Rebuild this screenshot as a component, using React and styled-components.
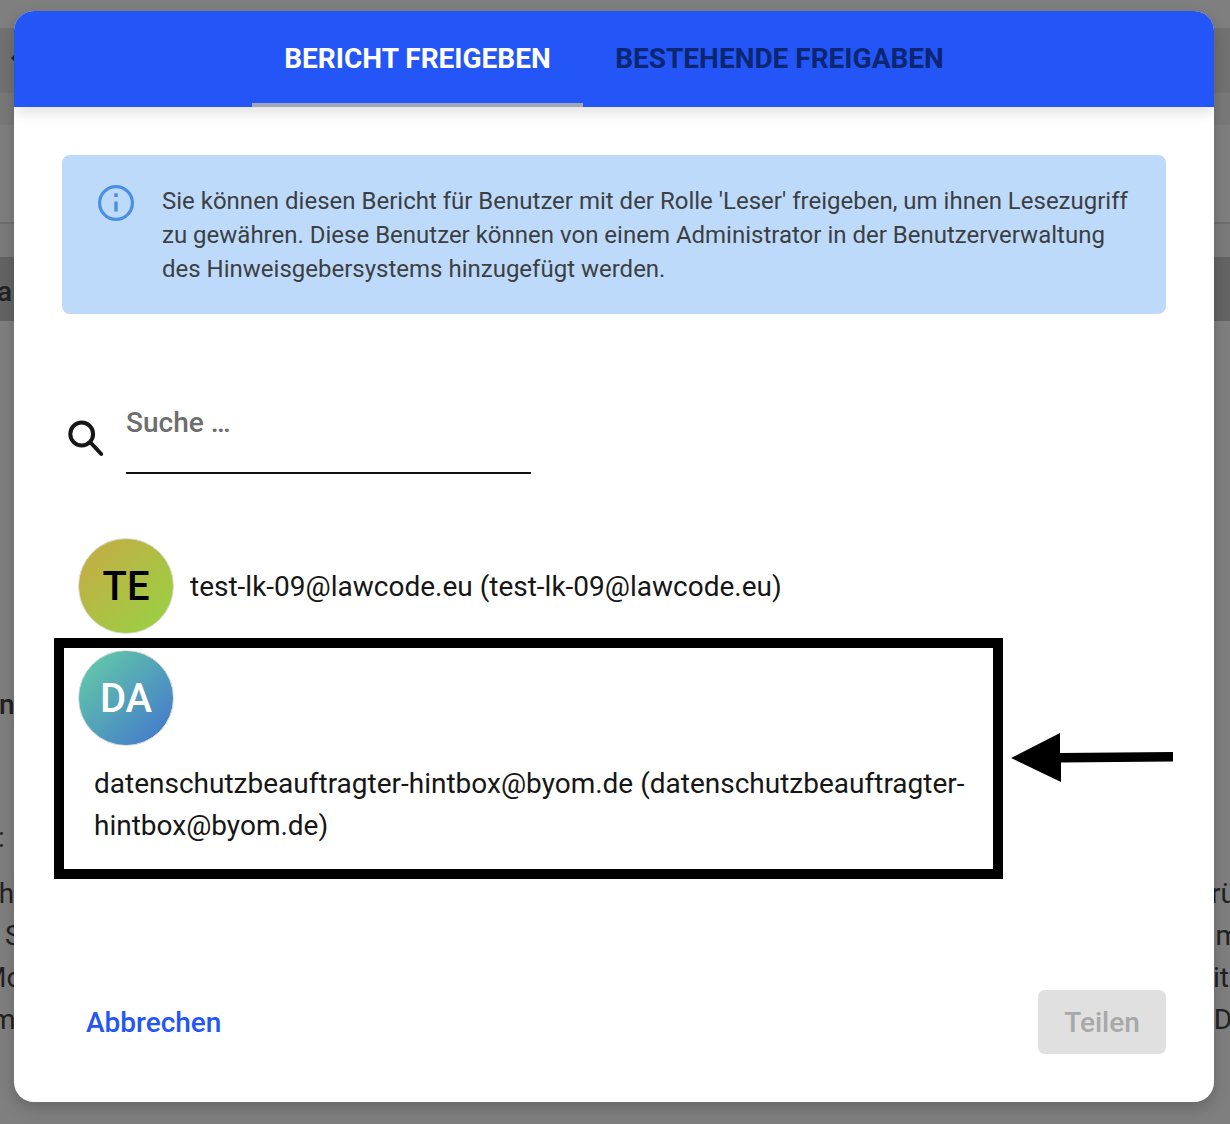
import React from "react";
import styled, { createGlobalStyle } from "styled-components";

const GlobalStyle = createGlobalStyle`
  html, body {
    margin: 0;
    padding: 0;
    height: 100%;
    background: #7f7f7f;
    overflow: hidden;
    font-family: Roboto, "Liberation Sans", sans-serif;
  }
`;

const Page = styled.div`
  width: 1230px;
  height: 1124px;
  position: relative;
  overflow: hidden;
  background: #7f7f7f;
`;

const Backdrop = styled.div`
  display: flex;
  flex-direction: column;
  color: #222;
  font-size: 28px;
  line-height: 32px;
`;

const Band = styled.div`
  display: flex;
  align-items: center;
  flex: none;
  box-sizing: border-box;
  height: ${props => props.size}px;
  padding-top: ${props => props.nudge || 0}px;
  background: ${props => props.color || "transparent"};
`;

const BackArrow = styled.div`
  margin: 0 0 6px 11px;
  border-style: solid;
  border-width: 4px 4px 4px 0;
  border-color: transparent #222 transparent transparent;
`;

const BackLine = styled.div`
  display: flex;
  justify-content: space-between;
  align-items: center;
  flex: none;
  height: 42px;
  margin-top: ${props => props.above || 0}px;
  box-sizing: border-box;
`;

const BackWord = styled.span`
  white-space: nowrap;
  font-weight: ${props => props.weight || 400};
  margin-left: ${props => props.before || 0}px;
  margin-right: ${props => props.after || 0}px;
`;

const Overlay = styled.div`
  position: absolute;
  inset: 0;
  display: flex;
  padding: 11px 16px 22px 14px;
`;

const Dialog = styled.div`
  flex: 1;
  display: flex;
  flex-direction: column;
  background: #fff;
  border-radius: 20px;
  overflow: hidden;
  box-shadow: 0 6px 16px rgba(0, 0, 0, 0.2);
`;

const TabBar = styled.div`
  flex: none;
  height: 96px;
  display: flex;
  justify-content: center;
  background: #2355f7;
  box-shadow: 0 4px 14px rgba(0, 0, 0, 0.14);
  position: relative;
`;

const Tab = styled.div`
  width: ${props => props.width}px;
  box-sizing: border-box;
  padding-top: 30px;
  text-align: center;
  font-size: 28px;
  line-height: 36px;
  font-weight: 700;
  white-space: nowrap;
  color: ${props => (props.active ? "#fff" : "#0c2672")};
  border-bottom: 4px solid ${props => (props.active ? "#a3a8b8" : "transparent")};
`;

const Body = styled.div`
  flex: 1;
  display: flex;
  flex-direction: column;
  padding: 48px;
`;

const InfoBox = styled.div`
  display: flex;
  height: 159px;
  box-sizing: border-box;
  padding: 29px 36px 0 35px;
  gap: 27px;
  background: #bedafb;
  border-radius: 8px;
`;

const InfoIcon = styled.svg`
  flex: none;
  width: 38px;
  height: 38px;
  color: #4a8fe6;
`;

const InfoText = styled.p`
  margin: 0;
  font-size: 24px;
  line-height: 34px;
  color: #3c3f42;
`;

const SearchRow = styled.div`
  display: flex;
  gap: 16px;
  margin-top: 72px;
  height: 88px;
`;

const SearchIcon = styled.svg`
  flex: none;
  width: 48px;
  height: 48px;
  margin-top: 29px;
  color: #161616;
`;

const SearchField = styled.div`
  width: 405px;
  box-sizing: border-box;
  padding-top: 21px;
  border-bottom: 2px solid #111;
  font-size: 28px;
  line-height: 32px;
  font-weight: 500;
  color: #6d6d6d;
`;

const UserList = styled.div`
  margin-top: 64px;
  display: flex;
  flex-direction: column;
  gap: 4px;
`;

const UserRow = styled.div`
  display: flex;
  align-items: center;
  gap: 16px;
  padding: 0 16px;
  height: 96px;
`;

const Avatar = styled.div`
  flex: none;
  width: 96px;
  height: 96px;
  border-radius: 50%;
  border: 1px solid #ddd;
  box-sizing: border-box;
  display: flex;
  align-items: center;
  justify-content: center;
  font-size: 40px;
  font-weight: 500;
  color: ${props => props.ink};
  background: linear-gradient(135deg, ${props => props.from}, ${props => props.to});
`;

const UserName = styled.div`
  font-size: 28px;
  line-height: 42px;
  padding-top: 2px;
  color: #161616;
`;

const Marked = styled.div`
  position: relative;
  width: 949px;
  margin-left: -8px;
  box-sizing: border-box;
  height: 241px;
  border: 10px solid #000;
  padding: 2px 16px 0 14px;
`;

const MarkedName = styled(UserName)`
  padding: 16px 0 0 16px;
  margin-top: 1px;
`;

const Arrow = styled.svg`
  position: absolute;
  left: 947px;
  top: 82px;
  width: 170px;
  height: 60px;
`;

const Actions = styled.div`
  margin-top: auto;
  display: flex;
  justify-content: space-between;
  align-items: center;
`;

const CancelButton = styled.button`
  border: 0;
  background: transparent;
  padding: 2px 24px 0;
  font: 500 28px/36px Roboto, sans-serif;
  color: #2355f7;
`;

const ShareButton = styled.button`
  border: 0;
  width: 128px;
  height: 64px;
  padding: 2px 0 0;
  border-radius: 7px;
  background: #e0e0e0;
  font: 500 28px/36px Roboto, sans-serif;
  color: #a8a8a8;
`;

const App = () => (
  <Page>
    <GlobalStyle />
    <Backdrop>
      <Band size={28} />
      <Band size={65} color="#727272">
        <BackArrow />
      </Band>
      <Band size={32} color="#797979" />
      <Band size={97} />
      <Band size={2} color="#6e6e6e" />
      <Band size={33} color="#7b7b7b" />
      <Band size={64} color="#646464" nudge={6}>
        <BackWord weight={500} before={-3}>a</BackWord>
      </Band>
      <BackLine above={363}>
        <BackWord weight={500} before={-1}>n</BackWord>
      </BackLine>
      <BackLine above={91}>
        <BackWord before={-2}>:</BackWord>
      </BackLine>
      <BackLine above={14}>
        <BackWord before={-16}>eh</BackWord>
        <BackWord after={-6}>rü</BackWord>
      </BackLine>
      <BackLine>
        <BackWord before={5}>S</BackWord>
        <BackWord after={-10}>m</BackWord>
      </BackLine>
      <BackLine>
        <BackWord before={-18}>Mo</BackWord>
        <BackWord after={1}>it</BackWord>
      </BackLine>
      <BackLine>
        <BackWord before={-9}>m</BackWord>
        <BackWord after={-2}>D</BackWord>
      </BackLine>
    </Backdrop>
    <Overlay>
      <Dialog>
        <TabBar>
          <Tab active width={331}>BERICHT FREIGEBEN</Tab>
          <Tab width={393}>BESTEHENDE FREIGABEN</Tab>
        </TabBar>
        <Body>
          <InfoBox>
            <InfoIcon viewBox="0 0 38 38" fill="none" stroke="currentColor" strokeWidth="3.2">
              <circle cx="19" cy="19" r="16.4" />
              <path d="M19 17.5v10" strokeWidth="3.4" />
              <path d="M19 9.2v3.8" strokeWidth="3.4" />
            </InfoIcon>
            <InfoText>
              Sie können diesen Bericht für Benutzer mit der Rolle 'Leser' freigeben, um ihnen Lesezugriff
              zu gewähren. Diese Benutzer können von einem Administrator in der Benutzerverwaltung
              des Hinweisgebersystems hinzugefügt werden.
            </InfoText>
          </InfoBox>
          <SearchRow>
            <SearchIcon viewBox="0 0 48 48" fill="none" stroke="currentColor" strokeWidth="4" strokeLinecap="round">
              <circle cx="19.7" cy="19" r="11.4" />
              <path d="M29 28l10.2 11" />
            </SearchIcon>
            <SearchField>Suche …</SearchField>
          </SearchRow>
          <UserList>
            <UserRow>
              <Avatar from="#c8a945" to="#96d443" ink="#000">TE</Avatar>
              <UserName>test-lk-09@lawcode.eu (test-lk-09@lawcode.eu)</UserName>
            </UserRow>
            <Marked>
              <Avatar from="#65d0a5" to="#4173cf" ink="#fff">DA</Avatar>
              <MarkedName>datenschutzbeauftragter-hintbox@byom.de (datenschutzbeauftragter-hintbox@byom.de)</MarkedName>
              <Arrow viewBox="0 0 170 60" fill="#000">
                <polygon points="0,28 49,3 49,23 162,22 162,31.5 50,32.5 50,52" />
              </Arrow>
            </Marked>
          </UserList>
          <Actions>
            <CancelButton>Abbrechen</CancelButton>
            <ShareButton disabled>Teilen</ShareButton>
          </Actions>
        </Body>
      </Dialog>
    </Overlay>
  </Page>
);

export default App;
